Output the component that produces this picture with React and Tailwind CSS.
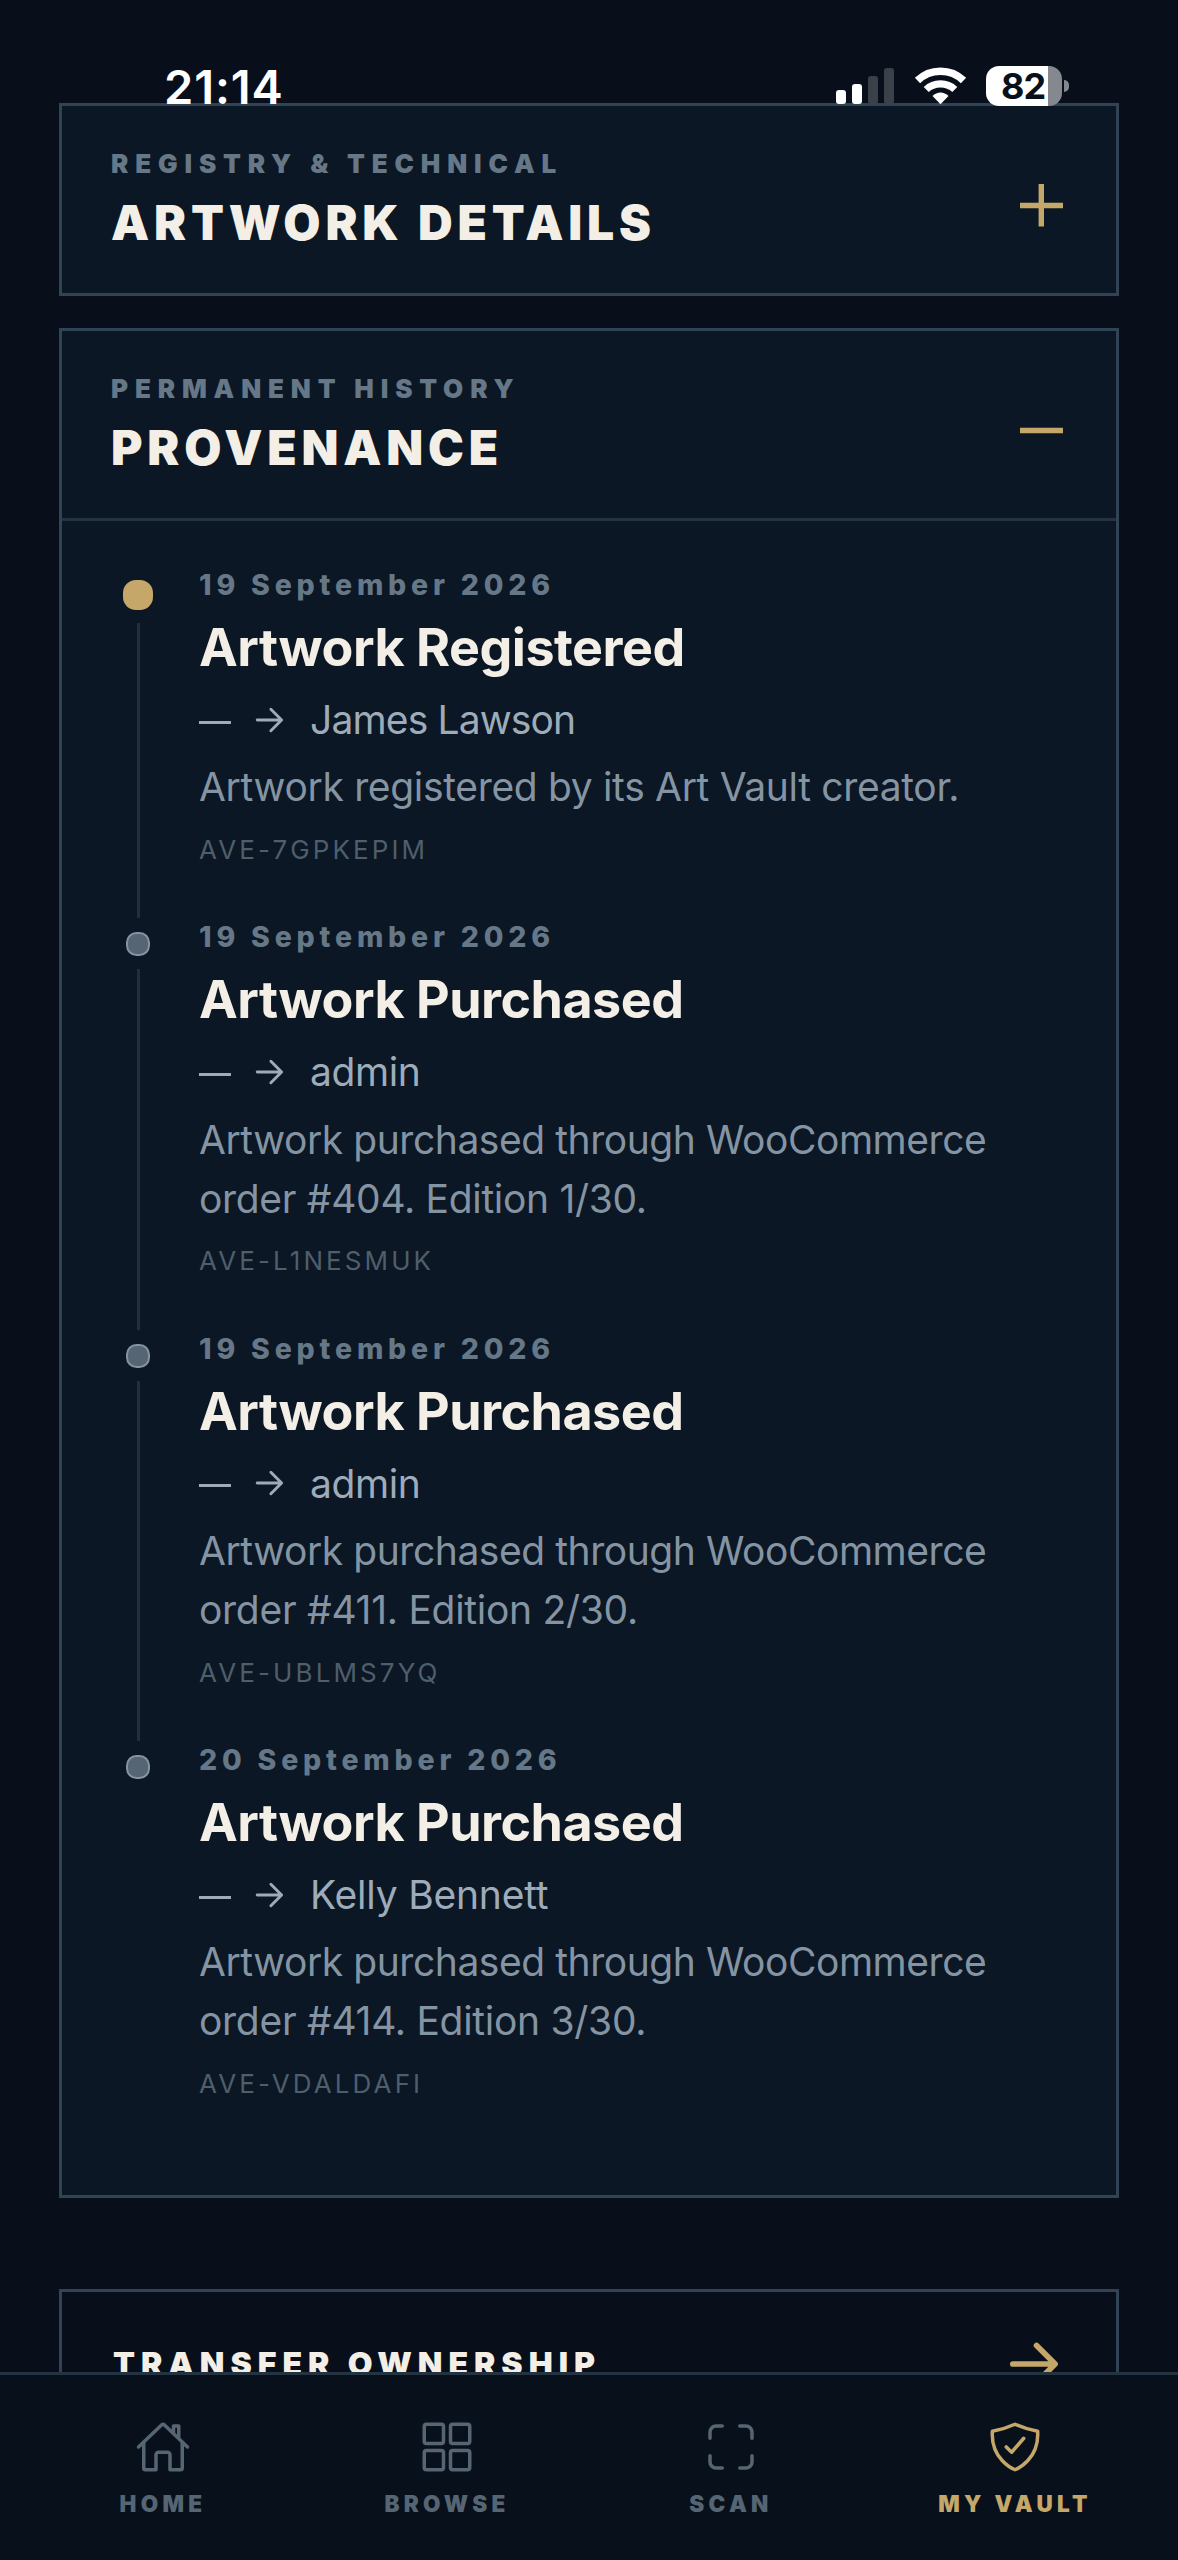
import {
  IoHomeOutline,
  IoGridOutline,
  IoScanOutline,
  IoShieldCheckmarkOutline,
} from "react-icons/io5";

const events = [
  {
    date: "19 September 2026",
    title: "Artwork Registered",
    to: "James Lawson",
    toClass: "tracking-[-0.85px]",
    lines: [{ text: "Artwork registered by its Art Vault creator.", cls: "tracking-[-0.33px]" }],
    code: "AVE-7GPKEPIM",
  },
  {
    date: "19 September 2026",
    title: "Artwork Purchased",
    to: "admin",
    toClass: "tracking-[-0.4px]",
    lines: [
      { text: "Artwork purchased through WooCommerce", cls: "tracking-[-0.44px]" },
      { text: "order #404. Edition 1/30.", cls: "tracking-[-0.31px]" },
    ],
    code: "AVE-L1NESMUK",
  },
  {
    date: "19 September 2026",
    title: "Artwork Purchased",
    to: "admin",
    toClass: "tracking-[-0.4px]",
    lines: [
      { text: "Artwork purchased through WooCommerce", cls: "tracking-[-0.44px]" },
      { text: "order #411. Edition 2/30.", cls: "tracking-[-0.28px]" },
    ],
    code: "AVE-UBLMS7YQ",
  },
  {
    date: "20 September 2026",
    title: "Artwork Purchased",
    to: "Kelly Bennett",
    toClass: "tracking-[-0.2px]",
    lines: [
      { text: "Artwork purchased through WooCommerce", cls: "tracking-[-0.44px]" },
      { text: "order #414. Edition 3/30.", cls: "tracking-[-0.28px]" },
    ],
    code: "AVE-VDALDAFI",
  },
];

function Arrow({ className, weight }) {
  return (
    <svg className={className} viewBox="0 0 512 512" fill="none" stroke="currentColor" strokeWidth={weight} strokeLinecap="round" strokeLinejoin="round">
      <path d="M268 112l144 144-144 144M392 256H84" />
    </svg>
  );
}

function StatusBar() {
  return (
    <div className="absolute inset-x-0 top-0 h-[120px]">
      <div className="absolute left-[164px] top-[57px] text-[47px] leading-[60px] font-semibold tracking-[0.9px] text-white">21:14</div>
      <div className="absolute left-[836px] top-[68px] flex h-9 items-end gap-[6px]">
        <i className="h-[14px] w-[10px] rounded-[3px] bg-white" />
        <i className="h-5 w-[10px] rounded-[3px] bg-white" />
        <i className="h-7 w-[10px] rounded-[3px] bg-[#3a4148]" />
        <i className="h-9 w-[10px] rounded-[3px] bg-[#3a4148]" />
      </div>
      <svg className="absolute left-[914px] top-[66px]" width="53" height="39" viewBox="0 0 53 39" fill="none" stroke="#fff">
        <path d="M3.5 14.5C16 2 37 2 49.5 14.5" strokeWidth="7.5" />
        <path d="M12.2 23.5C20 16 33 16 40.8 23.5" strokeWidth="7.2" />
        <path d="M18.5 30C23 25.3 30 25.3 34.5 30L26.5 38.3Z" fill="#fff" stroke="none" />
      </svg>
      <div className="absolute left-[986px] top-[66px] flex h-10 w-[76px] items-center rounded-[13px] bg-[linear-gradient(90deg,#fff_62.5px,#85888f_62.5px)] pl-[15px] text-[36px] font-bold leading-10 tracking-[-1px] text-[#08111b]">82</div>
      <div className="absolute left-[1064px] top-[80px] h-3 w-[5px] rounded-r-[5px] bg-[#85888f]" />
    </div>
  );
}

function Header({ label, title, open }) {
  return (
    <div className="flex h-[187px] justify-between pl-[49px] pr-[53px]">
      <div className="pt-[45px]">
        <div className="text-[26px] font-black leading-[26px] tracking-[6.85px] text-[#667787]">{label}</div>
        <div className="mt-4 text-[48px] font-black leading-[60px] tracking-[4.85px] text-[#f4efe6]">{title}</div>
      </div>
      <svg className="mt-[77px]" width="44" height="44" viewBox="0 0 44 44" stroke="#c5a869" strokeWidth="5.4">
        <path d={open ? "M1 22.5H44" : "M1 22.5H44M22.3 1V43.5"} />
      </svg>
    </div>
  );
}

function Event({ item, first, last }) {
  return (
    <div className="flex">
      <div className="flex w-[30px] flex-col items-center pt-[10px]">
        {first ? (
          <div className="size-[30px] shrink-0 rounded-[13px] bg-[#c5a869]" />
        ) : (
          <div className="size-6 shrink-0 rounded-[10.5px] border-2 border-[#8593a1] bg-[#566573]" />
        )}
        {!last && <div className="mb-[4px] mt-[13px] w-[3px] flex-1 bg-[#202f3d]" />}
      </div>
      <div className="whitespace-nowrap pb-[57.4px] pl-[46px]">
        <div className="text-[28.5px] font-extrabold leading-[30px] tracking-[4.8px] text-[#667787]">{item.date}</div>
        <div className="mt-[18px] text-[52px] font-[660] leading-[60px] tracking-[-0.5px] text-[#f4efe6]">{item.title}</div>
        <div className="mt-[22px] flex h-10 items-center text-[39px] leading-10 text-[#9eacb9]">
          <span className="mt-[4px] h-[3px] w-8 bg-[#9eacb9]" />
          <Arrow className="mb-px ml-[20px] size-[38px]" weight={40} />
          <span className={`ml-[21px] ${item.toClass}`}>{item.to}</span>
        </div>
        <div className="mt-[18.3px] text-[39px] leading-[58.8px] text-[#8594a3]">
          {item.lines.map((l) => (
            <div key={l.text} className={l.cls}>{l.text}</div>
          ))}
        </div>
        <div className="mt-[18px] text-[26px] leading-[30px] tracking-[3.1px] text-[#4f5e6b]">{item.code}</div>
      </div>
    </div>
  );
}

const tabs = [
  { label: "HOME", Icon: IoHomeOutline },
  { label: "BROWSE", Icon: IoGridOutline },
  { label: "SCAN", Icon: IoScanOutline },
  { label: "MY VAULT", Icon: IoShieldCheckmarkOutline, active: true },
];

export default function App() {
  return (
    <div className="relative flex h-[2560px] w-[1178px] flex-col overflow-hidden bg-[#080f1a] font-['Inter',sans-serif]">
      <main className="h-[2372px] shrink-0 overflow-hidden px-[59px] pt-[103px]">
        <section className="h-[193px] border-[3px] border-[#314455] bg-[#0b1724]">
          <Header label="REGISTRY & TECHNICAL" title="ARTWORK DETAILS" />
        </section>
        <section className="mt-8 h-[1870px] border-[3px] border-[#314455] bg-[#0b1724]">
          <Header label="PERMANENT HISTORY" title="PROVENANCE" open />
          <div className="border-t-[3px] border-[#233341] pl-[61px] pt-[49px]">
            {events.map((e, i) => (
              <Event key={e.code} item={e} first={i === 0} last={i === events.length - 1} />
            ))}
          </div>
        </section>
        <section className="mt-[91px] flex h-[150px] items-center justify-between border-[3px] border-[#314455] pl-[51px] pr-[48px]">
          <div className="text-[32px] font-black leading-[40px] tracking-[6px] text-[#f4efe6]">TRANSFER OWNERSHIP</div>
          <Arrow className="size-[66px] text-[#c5a869]" weight={44} />
        </section>
      </main>
      <nav className="grid h-[188px] grid-cols-4 border-t-[3px] border-[#233341] bg-[#08111b] px-[21px] pt-[44px]">
        {tabs.map(({ label, Icon, active }) => (
          <div key={label} className={active ? "flex flex-col items-center text-[#c5a869]" : "flex flex-col items-center text-[#566573]"}>
            <Icon className="size-14" />
            <div className="mt-[14px] text-[22.5px] font-black leading-[30px] tracking-[4.3px]">{label}</div>
          </div>
        ))}
      </nav>
      <StatusBar />
    </div>
  );
}
